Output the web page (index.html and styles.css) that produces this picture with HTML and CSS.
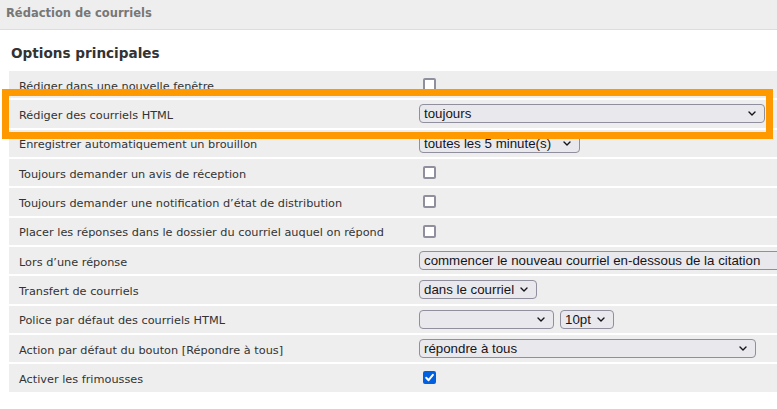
FILE: index.html
```html
<!DOCTYPE html>
<html lang="fr">
<head>
<meta charset="utf-8">
<title>Rédaction de courriels</title>
<link rel="stylesheet" href="styles.css">
</head>
<body>
<div class="header">Rédaction de courriels</div>
<div class="content">
  <h2 class="title">Options principales</h2>
  <div class="table">
    <div class="row">
      <div class="label">Rédiger dans une nouvelle fenêtre</div>
      <div class="ctrl"><input type="checkbox" class="cb"></div>
    </div>
    <div class="row">
      <div class="label">Rédiger des courriels HTML</div>
      <div class="ctrl"><span class="sel w-346"><select><option>toujours</option></select><svg class="chev" viewBox="0 0 8 5"><path d="M1 1 L4 4 L7 1"/></svg></span></div>
    </div>
    <div class="row">
      <div class="label">Enregistrer automatiquement un brouillon</div>
      <div class="ctrl"><span class="sel w-160"><select><option>toutes les 5 minute(s)</option></select><svg class="chev" viewBox="0 0 8 5"><path d="M1 1 L4 4 L7 1"/></svg></span></div>
    </div>
    <div class="row">
      <div class="label">Toujours demander un avis de réception</div>
      <div class="ctrl"><input type="checkbox" class="cb"></div>
    </div>
    <div class="row">
      <div class="label">Toujours demander une notification d’état de distribution</div>
      <div class="ctrl"><input type="checkbox" class="cb"></div>
    </div>
    <div class="row">
      <div class="label">Placer les réponses dans le dossier du courriel auquel on répond</div>
      <div class="ctrl"><input type="checkbox" class="cb"></div>
    </div>
    <div class="row">
      <div class="label">Lors d’une réponse</div>
      <div class="ctrl"><span class="sel w-420"><select><option>commencer le nouveau courriel en-dessous de la citation</option></select><svg class="chev" viewBox="0 0 8 5"><path d="M1 1 L4 4 L7 1"/></svg></span></div>
    </div>
    <div class="row">
      <div class="label">Transfert de courriels</div>
      <div class="ctrl"><span class="sel w-117"><select><option>dans le courriel</option></select><svg class="chev" viewBox="0 0 8 5"><path d="M1 1 L4 4 L7 1"/></svg></span></div>
    </div>
    <div class="row">
      <div class="label">Police par défaut des courriels HTML</div>
      <div class="ctrl pair"><span class="sel w-135"><select><option></option></select><svg class="chev" viewBox="0 0 8 5"><path d="M1 1 L4 4 L7 1"/></svg></span><span class="sel w-54"><select><option>10pt</option></select><svg class="chev" viewBox="0 0 8 5"><path d="M1 1 L4 4 L7 1"/></svg></span></div>
    </div>
    <div class="row">
      <div class="label">Action par défaut du bouton [Répondre à tous]</div>
      <div class="ctrl"><span class="sel w-337"><select><option>répondre à tous</option></select><svg class="chev" viewBox="0 0 8 5"><path d="M1 1 L4 4 L7 1"/></svg></span></div>
    </div>
    <div class="row">
      <div class="label">Activer les frimousses</div>
      <div class="ctrl"><span class="cbwrap"><input type="checkbox" class="cb" checked><svg class="tick" viewBox="0 0 13 13"><path d="M3.2 6.8 L5.6 9.2 L9.9 3.9"/></svg></span></div>
    </div>
  </div>
  <div class="highlight"></div>
</div>
</body>
</html>
```

FILE: styles.css
```css
html, body {
  margin: 0;
  padding: 0;
  background: #ffffff;
  overflow: hidden;
}
body {
  width: 777px;
  height: 409px;
  font-family: "DejaVu Sans", Verdana, sans-serif;
  color: #333333;
}
.header {
  height: 29px;
  line-height: 27px;
  background: #eeeeee;
  border-bottom: 1px solid #dddddd;
  padding-left: 6px;
  font-size: 11.5px;
  font-weight: bold;
  color: #777777;
}
.content {
  position: relative;
  padding: 13px 0 0 9px;
}
.title {
  margin: 0 0 8px 2px;
  line-height: 20px;
  font-size: 13.6px;
  font-weight: bold;
  color: #333333;
}
.table {
  display: flex;
  flex-direction: column;
  gap: 2px;
}
.row {
  display: flex;
  align-items: center;
  height: 27.33px;
  background: #eeeeee;
  overflow: hidden;
}
.label {
  width: 400px;
  flex: none;
  padding: 3px 0 0 10px;
  font-size: 11.3px;
  color: #333333;
  white-space: nowrap;
}
.ctrl {
  display: flex;
  align-items: center;
  gap: 6px;
  white-space: nowrap;
}
.cb {
  appearance: none;
  -webkit-appearance: none;
  width: 13px;
  height: 13px;
  margin: 0 0 0 4px;
  border: 2px solid #8f8f9d;
  border-radius: 2px;
  background: #ffffff;
  box-sizing: border-box;
  display: block;
}
.cb:checked {
  border-color: #0060df;
  background: #0060df;
}
.cbwrap {
  position: relative;
  display: block;
}
.tick {
  position: absolute;
  left: 4px;
  top: 0;
  width: 13px;
  height: 13px;
  fill: none;
  stroke: #ffffff;
  stroke-width: 2;
  stroke-linecap: round;
  stroke-linejoin: round;
}
.sel {
  position: relative;
  display: block;
  height: 19px;
  flex: none;
}
.sel select {
  appearance: none;
  -webkit-appearance: none;
  display: block;
  width: 100%;
  height: 19px;
  margin: 0;
  padding: 0 20px 0 4px;
  box-sizing: border-box;
  border: 1px solid #8f8f9d;
  border-radius: 4px;
  background: #e9e9ed;
  font-family: "Liberation Sans", Arial, sans-serif;
  font-size: 13.3px;
  line-height: 17px;
  color: #15141a;
}
.chev {
  position: absolute;
  right: 9px;
  top: 7px;
  width: 8px;
  height: 5px;
  fill: none;
  stroke: #15141a;
  stroke-width: 1.4;
  stroke-linecap: round;
  stroke-linejoin: round;
}
.w-346 { width: 346px; }
.w-160 { width: 161px; }
.w-420 { width: 420px; }
.w-117 { width: 118px; }
.w-135 { width: 135px; }
.w-54 { width: 54px; }
.w-337 { width: 337px; }
.highlight {
  position: absolute;
  left: 2px;
  top: 59px;
  width: 771px;
  height: 50px;
  box-sizing: border-box;
  border: 7px solid #ff9900;
  pointer-events: none;
}
```
